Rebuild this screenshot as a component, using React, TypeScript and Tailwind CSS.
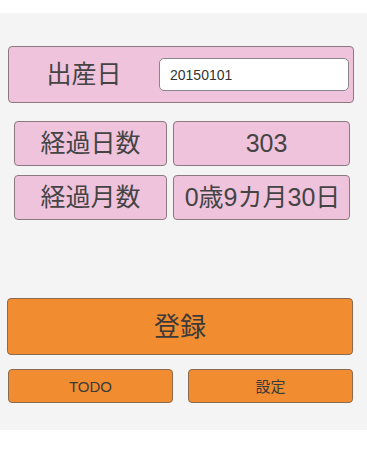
export default function App() {
  const font = { fontFamily: '"Liberation Sans", "Noto Sans CJK JP", sans-serif' };
  const pink = "bg-[#f0c3dc] border border-[#8a7a80] rounded-[4px]";
  const orange = "bg-[#f28c30] border border-[#8a6a50] rounded-[4px]";

  return (
    <div className="min-h-screen bg-white pt-[13px] text-[#444]" style={font}>
      <div className="h-[417px] bg-[#f4f4f4] pt-[33px]">
        {/* 出産日 */}
        <div className={`${pink} ml-[8px] w-[346px] h-[57px] flex items-center`}>
          <div className="w-[150px] text-center text-[25px] leading-none">出産日</div>
          <input
            defaultValue="20150101"
            className="w-[190px] h-[33px] bg-white border border-[#888] rounded-[5px] px-[10px] text-[14px] text-[#333] outline-none"
          />
        </div>

        {/* 経過 */}
        <div className="mt-[18px] ml-[14px] flex flex-col gap-[9px]">
          <div className="flex gap-[6px]">
            <div className={`${pink} w-[153px] h-[45px] flex items-center justify-center text-[25px] leading-none`}>経過日数</div>
            <div className={`${pink} w-[177px] h-[45px] flex items-center justify-center text-[25px] leading-none pl-[10px]`}>303</div>
          </div>
          <div className="flex gap-[6px]">
            <div className={`${pink} w-[153px] h-[45px] flex items-center justify-center text-[25px] leading-none`}>経過月数</div>
            <div className={`${pink} w-[177px] h-[45px] flex items-center justify-center text-[25px] leading-none pl-[2px]`}>0歳9カ月30日</div>
          </div>
        </div>

        {/* buttons */}
        <button className={`${orange} mt-[78px] ml-[7px] w-[346px] h-[57px] flex items-center justify-center text-[26px] leading-none text-[#3a3a3a]`}>
          登録
        </button>
        <div className="mt-[14px] ml-[8px] flex gap-[15px]">
          <button className={`${orange} w-[165px] h-[34px] flex items-center justify-center text-[15px] leading-none text-[#3a3a3a]`}>TODO</button>
          <button className={`${orange} w-[165px] h-[34px] flex items-center justify-center text-[15px] leading-none text-[#3a3a3a]`}>設定</button>
        </div>
      </div>
    </div>
  );
}
